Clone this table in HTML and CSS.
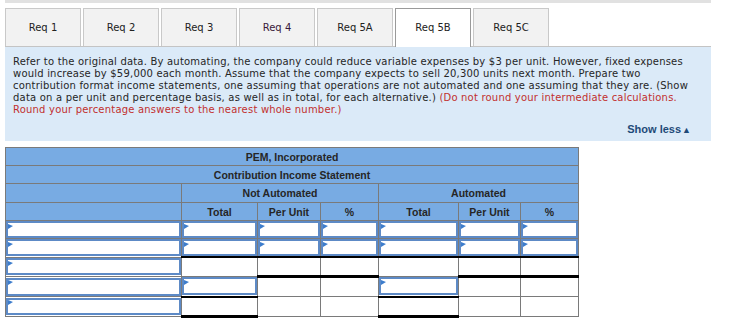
FILE: index.html
```html
<!DOCTYPE html>
<html lang="en">
<head>
    <title>Req 5B</title>
    <link rel="stylesheet" href="styles.css">
</head>
<body>
    <div class="page">
        <div class="topbar"></div>

        <div class="tabs">
            <div class="tab">Req 1</div>
            <div class="tab">Req 2</div>
            <div class="tab">Req 3</div>
            <div class="tab visited">Req 4</div>
            <div class="tab">Req 5A</div>
            <div class="tab active">Req 5B</div>
            <div class="tab">Req 5C</div>
        </div>

        <div class="question">
            <p>Refer to the original data. By automating, the company could reduce variable expenses by $3 per unit. However, fixed expenses would increase by $59,000 each month. Assume that the company expects to sell 20,300 units next month. Prepare two contribution format income statements, one assuming that operations are not automated and one assuming that they are. (Show data on a per unit and percentage basis, as well as in total, for each alternative.) <span class="note">(Do not round your intermediate calculations. Round your percentage answers to the nearest whole number.)</span></p>
            <div class="toggle">Show less<span class="arrow">&#9650;</span></div>
        </div>

        <table class="stmt">
            <colgroup>
                <col style="width:176px">
                <col style="width:76px">
                <col style="width:63px">
                <col style="width:58px">
                <col style="width:80px">
                <col style="width:62px">
                <col style="width:58px">
            </colgroup>
            <thead>
                <tr><th colspan="7">PEM, Incorporated</th></tr>
                <tr><th colspan="7">Contribution Income Statement</th></tr>
                <tr class="tall"><th></th><th colspan="3">Not Automated</th><th colspan="3">Automated</th></tr>
                <tr><th></th><th>Total</th><th>Per Unit</th><th>%</th><th>Total</th><th>Per Unit</th><th>%</th></tr>
            </thead>
            <tbody>
                <tr>
                    <td class="in"><input type="text"></td>
                    <td class="in"><input type="text"></td>
                    <td class="in"><input type="text"></td>
                    <td class="in"><input type="text"></td>
                    <td class="in"><input type="text"></td>
                    <td class="in"><input type="text"></td>
                    <td class="in"><input type="text"></td>
                </tr>
                <tr>
                    <td class="in"><input type="text"></td>
                    <td class="in"><input type="text"></td>
                    <td class="in"><input type="text"></td>
                    <td class="in"><input type="text"></td>
                    <td class="in"><input type="text"></td>
                    <td class="in"><input type="text"></td>
                    <td class="in"><input type="text"></td>
                </tr>
                <tr>
                    <td class="in"><input type="text"></td>
                    <td class="line"></td>
                    <td class="line total"></td>
                    <td class="line total"></td>
                    <td class="line"></td>
                    <td class="line total"></td>
                    <td class="line total"></td>
                </tr>
                <tr class="tall">
                    <td class="in"><input type="text"></td>
                    <td class="in"><input type="text"></td>
                    <td></td>
                    <td></td>
                    <td class="in"><input type="text"></td>
                    <td></td>
                    <td></td>
                </tr>
                <tr>
                    <td class="in"><input type="text"></td>
                    <td class="line total"></td>
                    <td></td>
                    <td></td>
                    <td class="line total"></td>
                    <td></td>
                    <td></td>
                </tr>
            </tbody>
        </table>
    </div>
</body>
</html>
```

FILE: styles.css
```css
:root {
    --panel-blue: #dbeaf8;
    --head-blue: #78abe3;
    --grid-gray: #7a7a7a;
    --field-blue: #5d8ac6;
    --flag-blue: #3d7dcc;
    --dark-text: #262626;
    --note-red: #c2302e;
}

body {
    margin: 0;
    background-color: #ffffff;
    color: var(--dark-text);
    font-family: 'DejaVu Sans', Verdana, sans-serif;
}

.page {
    margin-left: 5px;
    width: 706px;
}

.topbar {
    height: 3px;
    background-color: #e1e1e1;
}

.tabs {
    display: flex;
    align-items: flex-start;
    gap: 2px;
    margin-top: 5px;
    height: 38px;
    border-bottom: 1px solid #c4c4c4;
}

.tab {
    width: 76px;
    height: 38px;
    box-sizing: border-box;
    border: 1px solid #c9c9c9;
    border-bottom: none;
    background-color: #f2f2f2;
    font-size: 10px;
    display: flex;
    align-items: center;
    justify-content: center;
    color: #222;
}

.tab.visited {
    color: #3a1a3a;
}

/* the open tab runs over the rule below the row */
.tab.active {
    height: 39px;
    padding-bottom: 1px;
    background-color: #ffffff;
    border-color: #9a9a9a;
}

.question {
    background-color: var(--panel-blue);
    padding: 9px 20px 0 8px;
    height: 85px;
}

.question p {
    margin: 0;
    font-size: 10px;
    line-height: 12px;
    letter-spacing: 0.2px;
    color: var(--dark-text);
}

.note {
    color: var(--note-red);
}

.toggle {
    margin-top: 7px;
    text-align: right;
    font-family: 'Liberation Sans', Arial, sans-serif;
    font-weight: 700;
    font-size: 11px;
    color: #1f4a78;
}

.arrow {
    font-size: 9px;
    margin-left: 1px;
}

.stmt {
    margin-top: 6px;
    border-collapse: collapse;
    table-layout: fixed;
    width: 573px;
    font-family: 'Liberation Sans', Arial, sans-serif;
}

.stmt th {
    background-color: var(--head-blue);
    border: 1px solid var(--grid-gray);
    height: 17px;
    padding: 0;
    font-size: 10.5px;
    font-weight: 700;
    color: #262626;
    text-align: center;
}

.stmt tr.tall th {
    height: 18px;
}

.stmt td {
    border: 1px solid var(--grid-gray);
    height: 17px;
    padding: 0;
    background-color: #ffffff;
}

.stmt tr.tall td {
    height: 18px;
}

/* answer fields, with the little flag in the corner */
.stmt td.in {
    position: relative;
}

.stmt td.in::before {
    content: "";
    position: absolute;
    left: 2px;
    top: 3px;
    border-left: 5px solid var(--flag-blue);
    border-top: 2px solid transparent;
    border-bottom: 3px solid transparent;
}

.stmt td.in input {
    display: block;
    width: 100%;
    height: 17px;
    box-sizing: border-box;
    margin: 0;
    border: 2px solid var(--field-blue);
    background: #ffffff;
    outline: none;
}

.stmt tr.tall td.in input {
    height: 18px;
}

/* single underline above, double rule below totals */
.stmt td.line {
    border-top: 2px solid #000000;
}

.stmt td.total {
    border-bottom: 3px solid #000000;
}
```
